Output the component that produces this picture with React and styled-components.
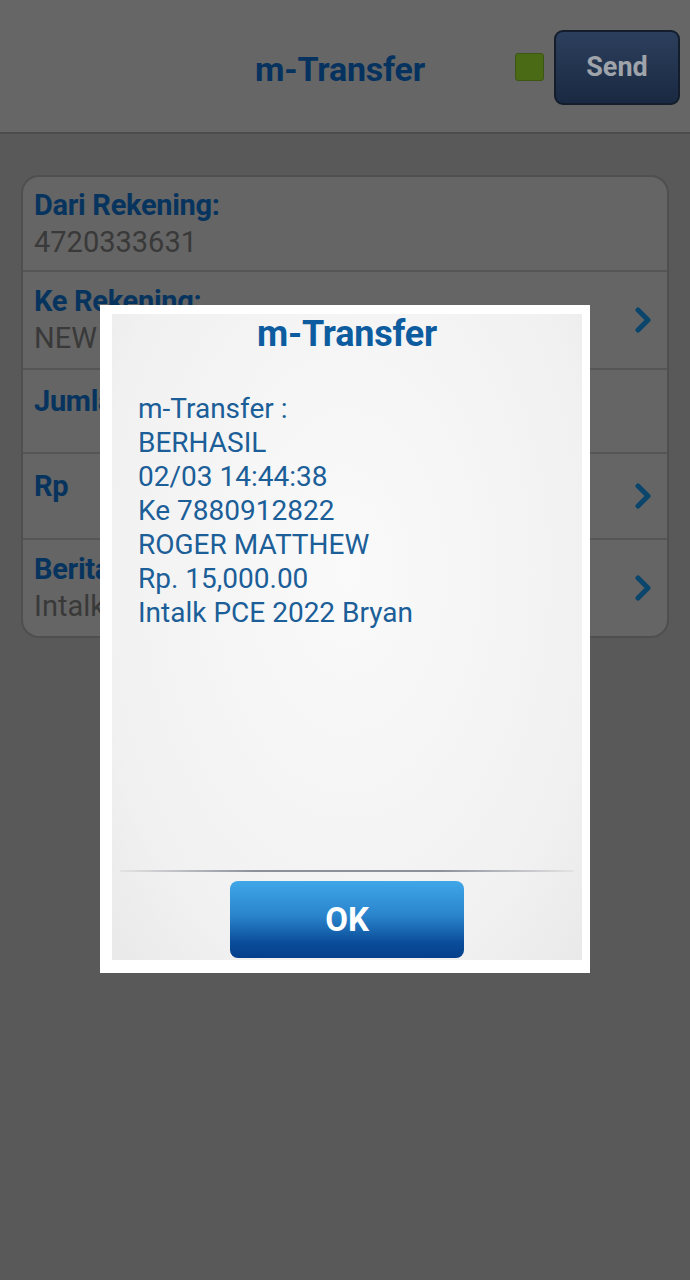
import React from "react";
import styled, { createGlobalStyle } from "styled-components";

const GlobalStyle = createGlobalStyle`
  html, body {
    margin: 0;
    padding: 0;
    background: #595959;
    font-family: Roboto, "Noto Sans", "Liberation Sans", sans-serif;
  }
  * { box-sizing: border-box; }
`;

const Screen = styled.div`
  position: relative;
  width: 690px;
  height: 1280px;
  background: #595959;
  overflow: hidden;
`;

const Header = styled.header`
  height: 134px;
  background: #666666;
  border-bottom: 2px solid #4c4c4c;
  display: grid;
  grid-template-columns: 1fr auto 1fr;
  align-items: center;
  padding: 0 10px 0 0;
`;

const Title = styled.h1`
  grid-column: 2;
  margin: 6px 0 0;
  font-size: 34px;
  font-weight: 700;
  color: #05325f;
  letter-spacing: -0.2px;
`;

const HeaderRight = styled.div`
  grid-column: 3;
  display: flex;
  justify-content: flex-end;
  align-items: center;
  gap: 10px;
  margin-top: 2px;
`;

const Status = styled.div`
  width: 29px;
  height: 28px;
  border-radius: 3px;
  background: #4a6a16;
  border: 1px solid #3d5612;
`;

const SendButton = styled.button`
  width: 126px;
  height: 75px;
  border-radius: 9px;
  border: 2px solid #141d2c;
  background: linear-gradient(#2c3f5c, #1a2942);
  color: #9fa3aa;
  font-family: inherit;
  font-size: 27px;
  font-weight: 700;
  padding: 0;
`;

const Content = styled.main`
  padding: 41px 21px 0 21px;
`;

const Card = styled.section`
  background: #656565;
  border: 2px solid #4f4f4f;
  border-radius: 18px;
  overflow: hidden;
`;

const Row = styled.div`
  height: ${(p) => p.$h}px;
  display: flex;
  align-items: center;
  justify-content: space-between;
  padding: 0 14px 0 11px;
  border-bottom: ${(p) => (p.$last ? "none" : "2px solid #555555")};
`;

const Field = styled.div`
  display: flex;
  flex-direction: column;
  gap: 4px;
`;

const Label = styled.div`
  font-size: 29px;
  font-weight: 700;
  line-height: 32px;
  color: #07345e;
  letter-spacing: -0.3px;
`;

const Value = styled.div`
  font-size: 29px;
  line-height: 34px;
  min-height: ${(p) => (p.$empty ? "16px" : "34px")};
  color: #393939;
`;

const Chevron = () => (
  <svg width="20" height="26" viewBox="0 0 20 26">
    <path
      d="M5 3 L15 13 L5 23"
      fill="none"
      stroke="#0a456c"
      strokeWidth="5"
      strokeLinecap="round"
      strokeLinejoin="round"
    />
  </svg>
);

const Dialog = styled.div`
  position: absolute;
  top: 305px;
  left: 100px;
  width: 490px;
  height: 668px;
  background: #ffffff;
  padding: 9px 8px 13px 12px;
`;

const Panel = styled.div`
  height: 100%;
  display: flex;
  flex-direction: column;
  background: radial-gradient(ellipse at 50% 40%, #fafafa 0%, #f1f1f1 75%, #e9e9e9 100%);
`;

const DialogTitle = styled.div`
  height: 40px;
  display: flex;
  justify-content: center;
  align-items: center;
  font-size: 36px;
  font-weight: 700;
  color: #0d5c9f;
  letter-spacing: -0.2px;
  margin: 0 20px;
`;

const Message = styled.div`
  flex: 1;
  padding: 38px 26px 0;
  font-size: 28px;
  line-height: 34px;
  color: #1b5e98;
`;

const Footer = styled.div`
  display: flex;
  flex-direction: column;
  align-items: center;
  padding-bottom: 2px;
`;

const Divider = styled.div`
  align-self: stretch;
  height: 2px;
  margin: 0 8px 9px;
  background: linear-gradient(90deg, #e4e4e4, #8b9099 30%, #8b9099 70%, #e4e4e4);
`;

const OkButton = styled.button`
  width: 234px;
  height: 77px;
  border: none;
  border-radius: 8px;
  background: linear-gradient(#3fa7e8, #2a84cc 45%, #0a4d9a 80%, #053f8b);
  color: #ffffff;
  font-family: inherit;
  font-size: 33px;
  font-weight: 700;
  padding: 0;
`;

const rows = [
  { label: "Dari Rekening:", value: "4720333631", h: 95 },
  { label: "Ke Rekening:", value: "NEW 7880912822", h: 98, arrow: true },
  { label: "Jumlah Transfer:", value: "", h: 84 },
  { label: "Rp", value: "", h: 86, arrow: true },
  { label: "Berita:", value: "Intalk PCE 2022 Bryan", h: 96, arrow: true },
];

const lines = [
  "m-Transfer :",
  "BERHASIL",
  "02/03 14:44:38",
  "Ke 7880912822",
  "ROGER MATTHEW",
  "Rp. 15,000.00",
  "Intalk PCE 2022 Bryan",
];

export default function App() {
  return (
    <Screen>
      <GlobalStyle />
      <Header>
        <Title>m-Transfer</Title>
        <HeaderRight>
          <Status />
          <SendButton>Send</SendButton>
        </HeaderRight>
      </Header>
      <Content>
        <Card>
          {rows.map((r, i) => (
            <Row key={r.label} $h={r.h} $last={i === rows.length - 1}>
              <Field>
                <Label>{r.label}</Label>
                <Value $empty={!r.value}>{r.value}</Value>
              </Field>
              {r.arrow && <Chevron />}
            </Row>
          ))}
        </Card>
      </Content>
      <Dialog>
        <Panel>
          <DialogTitle>m-Transfer</DialogTitle>
          <Message>
            {lines.map((l) => (
              <div key={l}>{l}</div>
            ))}
          </Message>
          <Footer>
            <Divider />
            <OkButton>OK</OkButton>
          </Footer>
        </Panel>
      </Dialog>
    </Screen>
  );
}
